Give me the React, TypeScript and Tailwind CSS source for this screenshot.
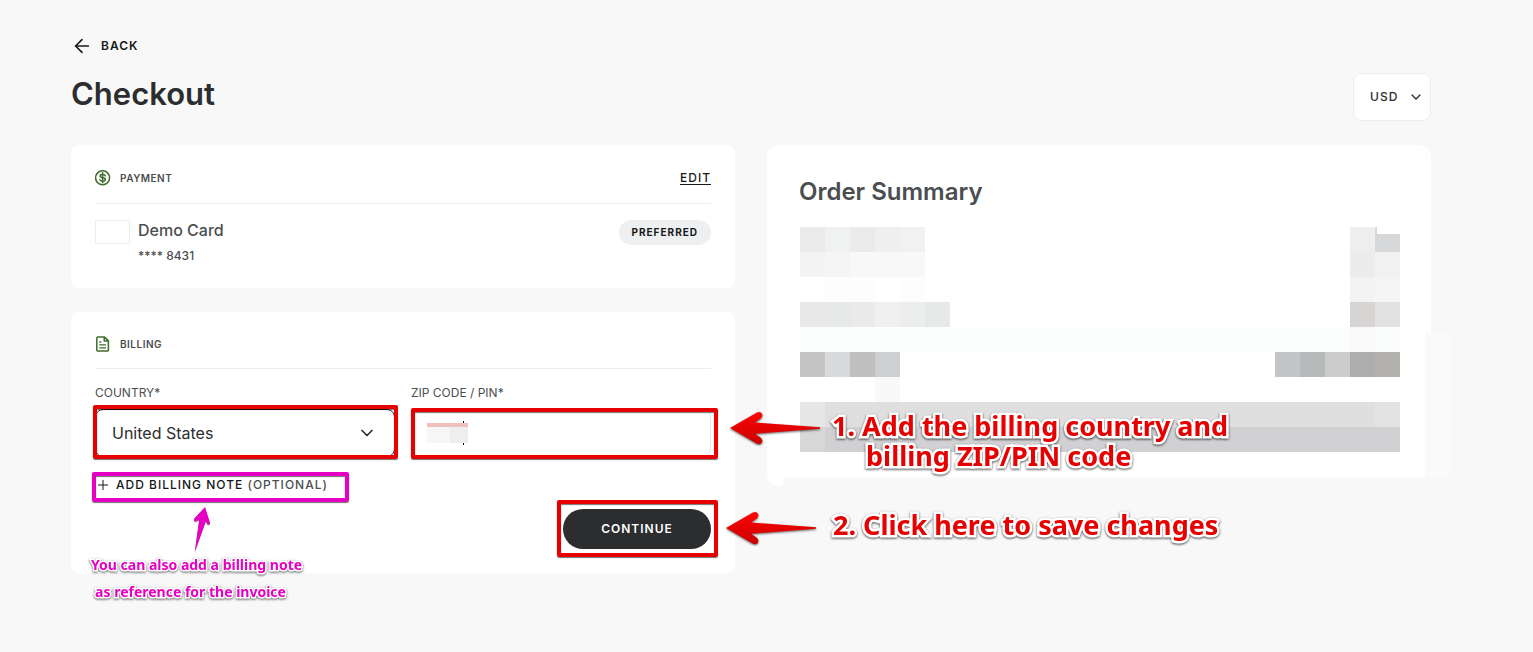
import clsx from "clsx";
import { ArrowLeft, ChevronDown, Plus } from "lucide-react";
import type { ReactNode } from "react";

// Redacted order lines: left cells and right cells, 25px each
const summaryRows: { left: string[]; right: string[] }[] = [
  {
    left: ["bg-[#ebebeb]", "bg-[#f0f2f1]", "bg-[#ebebeb]", "bg-[#efefef]", "bg-[#f1f1f1]"],
    right: ["bg-[#eeeeee]", "bg-[#d7d8da]"],
  },
  {
    left: ["bg-[#f3f3f3]", "bg-[#f5f5f5]", "bg-[#f8f8f8]", "bg-[#f8f8f8]", "bg-[#f8f8f8]"],
    right: ["bg-[#ececec]", "bg-[#f1f1f1]"],
  },
  {
    left: ["bg-white", "bg-[#fdfdfd]", "bg-[#fdfdfd]", "bg-white", "bg-[#fdfdfd]"],
    right: ["bg-[#f3f3f3]", "bg-[#f5f5f5]"],
  },
  {
    left: [
      "bg-[#e8e8e8]",
      "bg-[#e7e9e8]",
      "bg-[#eaeaea]",
      "bg-[#f0f0f0]",
      "bg-[#ebedef]",
      "bg-[#e7e9e8]",
    ],
    right: ["bg-[#d7d5d3]", "bg-[#e2e2e2]"],
  },
  { left: [], right: ["bg-[#fafafa]", "bg-[#fbfdfc]"] },
  {
    left: ["bg-[#c5c5c5]", "bg-[#d9dadc]", "bg-[#c0c0c0]", "bg-[#cecfd1]"],
    right: [
      "bg-[#c4c5c7]",
      "bg-[#b8b9bb]",
      "bg-[#cccccc]",
      "bg-[#adadad]",
      "bg-[#b3b1ad]",
    ],
  },
  { left: ["bg-white", "bg-white", "bg-white", "bg-[#f9f9f9]"], right: [] },
];

function Cells({ colors }: { colors: string[] }) {
  return (
    <div className="flex">
      {colors.map((color, i) => (
        <span key={i} className={clsx("size-[25px]", color)} />
      ))}
    </div>
  );
}

function DollarIcon() {
  return (
    <svg
      viewBox="0 0 16 16"
      className="size-4"
      fill="none"
      stroke="#3f6b2b"
      strokeWidth="1.5"
      strokeLinecap="round"
      aria-hidden="true"
    >
      <circle cx="7.6" cy="7.8" r="7" />
      <path d="M7.600 2.800v10" />
      <path d="M10.300 5.900C10 4.900 9 4.500 7.700 4.500c-1.500 0-2.600.5-2.600 1.600C5.100 7.300 6.200 7.600 7.600 7.800c1.500.2 2.700.6 2.700 1.800 0 1.100-1.200 1.600-2.700 1.600-1.400 0-2.400-.5-2.700-1.600" />
    </svg>
  );
}

function DocumentIcon() {
  return (
    <svg
      viewBox="0 0 16 16"
      className="size-4"
      fill="none"
      stroke="#3f6b2b"
      strokeWidth="1.5"
      strokeLinejoin="round"
      aria-hidden="true"
    >
      <path d="M3 .9h6.300l4.100 4v9a1.200 1.200 0 0 1-1.200 1.200H3A1.200 1.200 0 0 1 1.800 13.900V2.100A1.200 1.200 0 0 1 3 .9z" />
      <path d="M9.200 1v4h4" />
      <path d="M4.300 6h2M4.300 8.900h6.700M4.300 11.800h6.700" strokeWidth="1.300" />
    </svg>
  );
}

function RedArrow({ className }: { className?: string }) {
  return (
    <svg
      viewBox="0 0 94 36"
      className={clsx("pointer-events-none absolute h-9 w-[94px]", className)}
      aria-hidden="true"
    >
      <defs>
        <linearGradient id="redArrow" x1="0" y1="0" x2="0" y2="1">
          <stop offset="0" stopColor="#ff0505" />
          <stop offset="1" stopColor="#c90000" />
        </linearGradient>
      </defs>
      <path
        d="M1 18 28 2.500q3.500-1.500 5 1.200 1.200 2.800-1.500 5L26 12.500 91 17.300v1.400L26 23.800l5.500 3.700q2.700 2.200 1.500 5-1.500 2.600-5 1.200z"
        fill="url(#redArrow)"
        className="drop-shadow-[0_1px_1px_rgba(0,0,0,0.6)]"
      />
    </svg>
  );
}

function PinkArrow() {
  return (
    <svg
      viewBox="0 0 18 48"
      className="pointer-events-none absolute top-7 left-[98px] h-12 w-[18px]"
      aria-hidden="true"
    >
      <path
        d="M12 2 1.200 13.500q-.8 2.500 1 2.800l4-1.600L1.800 46.500 12.800 16l1.700 3q2.200 1 2.500-1.200z"
        fill="#e600c2"
        className="drop-shadow-[0_1px_0_rgba(80,0,70,0.6)]"
      />
    </svg>
  );
}

function Frame({ className }: { className?: string }) {
  return (
    <span
      className={clsx(
        "pointer-events-none absolute rounded-xs border-4 shadow-[0_1px_1px_rgba(0,0,0,0.55),inset_0_1px_1px_rgba(0,0,0,0.55)]",
        className
      )}
    />
  );
}

function Note({ className, children }: { className?: string; children: ReactNode }) {
  return (
    <p
      className={clsx(
        "pointer-events-none absolute font-['Noto_Sans',sans-serif] font-bold whitespace-nowrap [paint-order:stroke_fill]",
        className
      )}
    >
      {children}
    </p>
  );
}

function SectionTitle({ icon, children }: { icon: ReactNode; children: ReactNode }) {
  return (
    <h2 className="flex items-center gap-[9px] text-[10px] leading-4 font-semibold tracking-wider text-[#4b4e50] uppercase">
      {icon}
      {children}
    </h2>
  );
}

function PaymentCard() {
  return (
    <section className="rounded-lg bg-white p-6">
      <div className="flex items-center justify-between border-b border-[#ededed] pb-4">
        <SectionTitle icon={<DollarIcon />}>Payment</SectionTitle>
        <a
          href="#payment"
          className="text-xs leading-[18px] font-medium tracking-[1px] text-[#16181a] underline underline-offset-2"
        >
          EDIT
        </a>
      </div>
      <div className="flex items-start pt-4">
        <span className="h-6 w-[35px] border border-[#ededed]" />
        <div className="ml-2 flex-1 text-[#4b4e50]">
          <p className="text-base leading-5 font-medium">Demo Card</p>
          <p className="mt-2 text-xs leading-4 font-medium">**** 8431</p>
        </div>
        <span className="rounded-full bg-[#eeeff1] px-[13px] text-[10px] leading-[25px] font-bold tracking-[1px] text-[#16181a]">
          PREFERRED
        </span>
      </div>
    </section>
  );
}

function BillingCard() {
  return (
    <section className="rounded-lg bg-white p-6">
      <div className="border-b border-[#ededed] pb-4">
        <SectionTitle icon={<DocumentIcon />}>Billing</SectionTitle>
      </div>
      <div className="grid grid-cols-2 gap-4 pt-4">
        <div>
          <label htmlFor="country" className="block text-xs leading-4 text-[#4b4e50]">
            COUNTRY*
          </label>
          <div className="relative mt-2">
            <select
              id="country"
              className="block h-12 w-full appearance-none rounded-lg border border-[#2b2d2f] bg-white px-4 text-base text-[#2b2d2f]"
            >
              <option>United States</option>
            </select>
            <ChevronDown
              className="pointer-events-none absolute top-[14px] right-[18px] size-5 text-[#2b2d2f]"
              strokeWidth={2}
            />
            <Frame className="-top-1 -right-[3px] -bottom-0.5 -left-0.5 border-[#e60000]" />
          </div>
        </div>
        <div>
          <label htmlFor="zip" className="block text-xs leading-4 text-[#4b4e50]">
            ZIP CODE / PIN*
          </label>
          <div className="relative mt-2">
            <input
              id="zip"
              type="text"
              className="block h-12 w-full rounded-lg border border-[#e4e5e7] bg-white px-4 text-base"
            />
            <span className="absolute top-3 left-[52px] h-6 w-px bg-black" />
            <span className="absolute top-[14px] left-4 flex h-5 w-[41px] border-t-4 border-[#f0c0c0] bg-[#f6f6f6]">
              <span className="ml-auto w-[18px] bg-[#eeeeee]" />
            </span>
            <Frame className="-top-px -right-[7px] -bottom-0.5 left-0 border-[#e60000]" />
            <RedArrow className="top-px left-[calc(100%+18px)]" />
            <Note className="top-0.5 left-[calc(100%+121px)] text-[27px] leading-[30px] text-[#e60000] drop-shadow-[0_1px_1px_rgba(0,0,0,0.7)] [-webkit-text-stroke:5px_white]">
              1. Add the billing country and
              <span className="block pl-[34px]">billing ZIP/PIN code</span>
            </Note>
          </div>
        </div>
      </div>
      <div className="relative mt-5 flex">
        <button
          type="button"
          className="flex h-[15px] items-center gap-[5px] text-xs font-medium tracking-[1px] text-[#16181a]"
        >
          <Plus className="size-4" strokeWidth={1.5} />
          <span>
            ADD BILLING NOTE <span className="text-[#4b4e50]">(OPTIONAL)</span>
          </span>
        </button>
        <Frame className="-top-[5px] -left-[3px] h-[30px] w-[257px] border-[#e600c2]" />
        <PinkArrow />
        <Note className="top-[74px] -left-1 text-center text-sm leading-[27px] text-[#e600c2] drop-shadow-[0_1px_1px_rgba(0,0,0,0.6)] [-webkit-text-stroke:3px_white]">
          You can also add a billing note
          <span className="block pr-3">as reference for the invoice</span>
        </Note>
      </div>
      <div className="mt-[17px] flex justify-end">
        <div className="relative">
          <button
            type="button"
            className="block h-10 w-[148px] rounded-full bg-[#2b2d2f] text-xs font-semibold tracking-[1px] text-white"
          >
            CONTINUE
          </button>
          <Frame className="-top-[9px] -right-[7px] -bottom-2 -left-1.5 border-[#e60000]" />
          <RedArrow className="top-px left-[calc(100%+14px)]" />
          <Note className="top-px left-[calc(100%+122px)] text-[27px] leading-[30px] text-[#e60000] drop-shadow-[0_1px_1px_rgba(0,0,0,0.7)] [-webkit-text-stroke:5px_white]">
            2. Click here to save changes
          </Note>
        </div>
      </div>
    </section>
  );
}

function OrderSummary() {
  return (
    <section className="relative self-start rounded-xl bg-white pt-8 pr-[31px] pb-[34px] pl-[33px]">
      <h2 className="-ml-px text-2xl leading-[30px] font-semibold text-[#4b4e50]">
        Order Summary
      </h2>
      <div className="mt-5">
        {summaryRows.map((row, i) => (
          <div
            key={i}
            className={clsx("flex justify-between", i === 4 && "bg-[#fbfefd]")}
          >
            <Cells colors={row.left} />
            <Cells colors={row.right} />
          </div>
        ))}
        {/* the first amount starts a little lower than its label */}
        <span className="absolute top-[82px] right-[31px] h-[7px] w-[23px] bg-white" />
        <div className="flex h-[25px] bg-[#dfdfdf]">
          <span className="w-[25px] bg-[#e7e7e7]" />
          <span className="ml-auto w-[25px] bg-[#e3e3e3]" />
        </div>
        <div className="flex h-[25px] bg-[#d1d1d3]">
          <span className="w-[25px] bg-[#d7d7d7]" />
        </div>
      </div>
      <span className="absolute top-[187px] -right-[19px] bottom-[9px] w-[25px] bg-[#fafafa]" />
      <span className="absolute -right-[19px] bottom-0 left-4 h-[9px] bg-[#f8f8f8]" />
    </section>
  );
}

export default function App() {
  return (
    <main className="min-h-screen bg-[#f8f8f8] pt-[35px] pr-[102px] pb-10 pl-[71px] font-['Inter',sans-serif]">
      <a
        href="#back"
        className="flex h-[22px] w-fit items-center gap-2 text-xs font-semibold tracking-[1px] text-[#16181a]"
      >
        <ArrowLeft className="size-[22px]" strokeWidth={1.75} />
        BACK
      </a>
      <header className="mt-4 flex items-start justify-between">
        <h1 className="text-[31px] leading-[42px] font-semibold text-[#2b2d2f]">Checkout</h1>
        <div className="relative">
          <select
            aria-label="Currency"
            className="block h-12 w-[78px] appearance-none rounded-lg border border-[#ededed] bg-white pl-4 text-xs font-medium tracking-[1px] text-[#2b2d2f]"
          >
            <option>USD</option>
          </select>
          <ChevronDown
            className="pointer-events-none absolute top-4 right-[7px] size-4 text-[#2b2d2f]"
            strokeWidth={2}
          />
        </div>
      </header>
      <div className="mt-6 grid grid-cols-2 gap-8">
        <div className="relative z-10 flex flex-col gap-6">
          <PaymentCard />
          <BillingCard />
        </div>
        <OrderSummary />
      </div>
    </main>
  );
}
